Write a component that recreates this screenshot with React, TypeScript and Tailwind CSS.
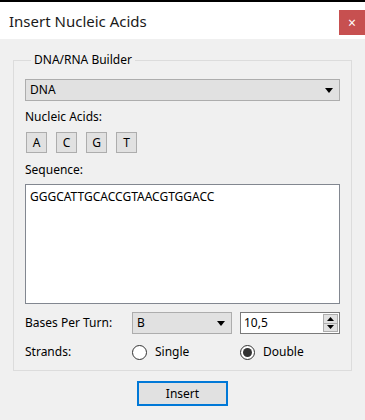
const font = { fontFamily: '"Noto Sans", "Open Sans", sans-serif' };

function Caret() {
  return (
    <svg width="8" height="5" viewBox="0 0 8 5">
      <path d="M0 0h8L4 5z" fill="#000" />
    </svg>
  );
}

function Radio({ label, checked }: { label: string; checked?: boolean }) {
  return (
    <div className="flex items-center gap-[8px]">
      <div className="flex h-[15px] w-[15px] items-center justify-center rounded-full border border-[#333] bg-white">
        {checked && <div className="h-[9px] w-[9px] rounded-full bg-[#333]" />}
      </div>
      <span>{label}</span>
    </div>
  );
}

export default function App() {
  const bases = ['A', 'C', 'G', 'T'];

  return (
    <div
      className="flex h-[420px] w-[365px] flex-col bg-[#f0f0f0] text-[12px] leading-[16px] text-black"
      style={font}>
      <div className="h-[2px] bg-black" />
      <div className="flex h-[37px] items-start justify-between bg-white">
        <div className="mt-[9px] ml-[9px] text-[15px] leading-[20px] text-[#1a1a1a]">Insert Nucleic Acids</div>
        <div className="mt-[8px] flex h-[25px] w-[26px] items-center justify-center bg-[#c75050] text-[14px] leading-none text-white">
          ×
        </div>
      </div>

      <fieldset className="mx-[13px] mt-[13px] border border-[#dcdcdc] px-[11px] pb-[10px]">
        <legend className="ml-[6px] px-[3px]">DNA/RNA Builder</legend>

        <div className="mt-[11px] flex h-[22px] items-center justify-between border border-[#adadad] bg-[#e1e1e1] pr-[6px] pl-[4px]">
          <span>DNA</span>
          <Caret />
        </div>

        <div className="mt-[8px]">Nucleic Acids:</div>
        <div className="mt-[7px] flex gap-[9px] pl-[1px]">
          {bases.map((b) => (
            <div
              key={b}
              className="flex h-[21px] w-[21px] items-center justify-center border border-[#adadad] bg-[#e1e1e1]">
              {b}
            </div>
          ))}
        </div>

        <div className="mt-[9px]">Sequence:</div>
        <div className="mt-[6px] h-[120px] border border-[#828790] bg-white px-[4px] pt-[4px]">
          GGGCATTGCACCGTAACGTGGACC
        </div>

        <div className="mt-[8px] flex h-[22px] items-center">
          <div className="w-[107px]">Bases Per Turn:</div>
          <div className="flex h-[22px] w-[100px] items-center justify-between border border-[#adadad] bg-[#e1e1e1] pr-[6px] pl-[4px]">
            <span>B</span>
            <Caret />
          </div>
          <div className="ml-[8px] flex h-[22px] flex-1 items-center justify-between border border-[#7a7a7a] bg-white pl-[3px]">
            <span>10,5</span>
            <div className="mr-[1px] flex h-[18px] w-[15px] flex-col border border-[#adadad] bg-[#e1e1e1]">
              <div className="flex flex-1 items-center justify-center border-b border-[#adadad]">
                <svg width="7" height="4" viewBox="0 0 7 4">
                  <path d="M0 4h7L3.5 0z" fill="#000" />
                </svg>
              </div>
              <div className="flex flex-1 items-center justify-center">
                <svg width="7" height="4" viewBox="0 0 7 4">
                  <path d="M0 0h7L3.5 4z" fill="#000" />
                </svg>
              </div>
            </div>
          </div>
        </div>

        <div className="mt-[10px] flex items-center">
          <div className="w-[107px]">Strands:</div>
          <div className="w-[108px]">
            <Radio label="Single" />
          </div>
          <Radio label="Double" checked />
        </div>
      </fieldset>

      <div className="mt-[10px] flex justify-center">
        <div className="flex h-[25px] w-[91px] items-center justify-center border-2 border-[#0078d7] bg-[#e1e1e1]">
          Insert
        </div>
      </div>
    </div>
  );
}
